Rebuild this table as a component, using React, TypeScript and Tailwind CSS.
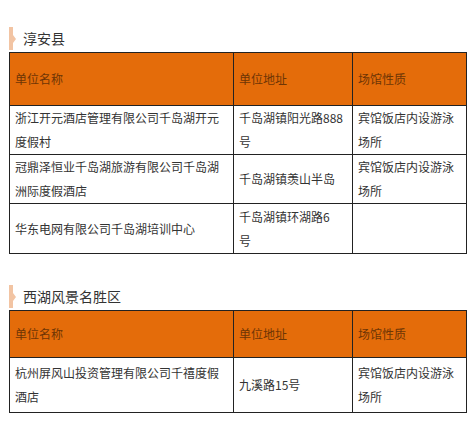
type Row = { name: string[]; addr: string[]; kind: string[]; h: number };

const font = { fontFamily: '"Noto Sans CJK SC", "Liberation Sans", sans-serif' };

const sections: { title: string; top: string; headH: number; rows: Row[] }[] = [
  {
    title: "淳安县",
    top: "mt-[27px]",
    headH: 53,
    rows: [
      {
        name: ["浙江开元酒店管理有限公司千岛湖开元", "度假村"],
        addr: ["千岛湖镇阳光路888", "号"],
        kind: ["宾馆饭店内设游泳", "场所"],
        h: 49,
      },
      {
        name: ["冠鼎泽恒业千岛湖旅游有限公司千岛湖", "洲际度假酒店"],
        addr: ["千岛湖镇羡山半岛"],
        kind: ["宾馆饭店内设游泳", "场所"],
        h: 48,
      },
      {
        name: ["华东电网有限公司千岛湖培训中心"],
        addr: ["千岛湖镇环湖路6", "号"],
        kind: [],
        h: 50,
      },
    ],
  },
  {
    title: "西湖风景名胜区",
    top: "mt-[31px]",
    headH: 47,
    rows: [
      {
        name: ["杭州屏风山投资管理有限公司千禧度假", "酒店"],
        addr: ["九溪路15号"],
        kind: ["宾馆饭店内设游泳", "场所"],
        h: 55,
      },
    ],
  },
];

function Lines({ lines }: { lines: string[] }) {
  return (
    <>
      {lines.map((l, i) => (
        <div key={i}>{l}</div>
      ))}
    </>
  );
}

function Heading({ title }: { title: string }) {
  return (
    <div className="flex items-center h-[23px] pl-[9px]">
      <div className="relative w-[4px] h-[23px] bg-[#f2c4a3]">
        <div className="absolute left-[4px] top-[8px] w-0 h-0 border-y-[4px] border-y-transparent border-l-[3px] border-l-[#f2c4a3]" />
      </div>
      <span className="ml-[10px] text-[14px] text-[#333] leading-[23px]">{title}</span>
    </div>
  );
}

export default function App() {
  return (
    <div className="w-[472px] h-[445px] bg-white overflow-hidden" style={font}>
      {sections.map((s) => (
        <div key={s.title} className={s.top}>
          <Heading title={s.title} />
          <table className="ml-[9px] mt-[2px] w-[457px] border-collapse text-[12px] leading-[24px] table-fixed">
            <colgroup>
              <col className="w-[224px]" />
              <col className="w-[119px]" />
              <col className="w-[114px]" />
            </colgroup>
            <thead>
              <tr className="bg-[#e46c0a] text-[#6e3505]" style={{ height: s.headH }}>
                <th className="border border-[#222] px-[5px] text-left font-normal">单位名称</th>
                <th className="border border-[#222] px-[5px] text-left font-normal">单位地址</th>
                <th className="border border-[#222] px-[5px] text-left font-normal">场馆性质</th>
              </tr>
            </thead>
            <tbody>
              {s.rows.map((r, i) => (
                <tr key={i} className="text-[#333]" style={{ height: r.h }}>
                  <td className="border border-[#222] px-[5px] align-middle">
                    <Lines lines={r.name} />
                  </td>
                  <td className="border border-[#222] px-[5px] align-middle">
                    <Lines lines={r.addr} />
                  </td>
                  <td className="border border-[#222] px-[5px] align-middle">
                    <Lines lines={r.kind} />
                  </td>
                </tr>
              ))}
            </tbody>
          </table>
        </div>
      ))}
    </div>
  );
}
